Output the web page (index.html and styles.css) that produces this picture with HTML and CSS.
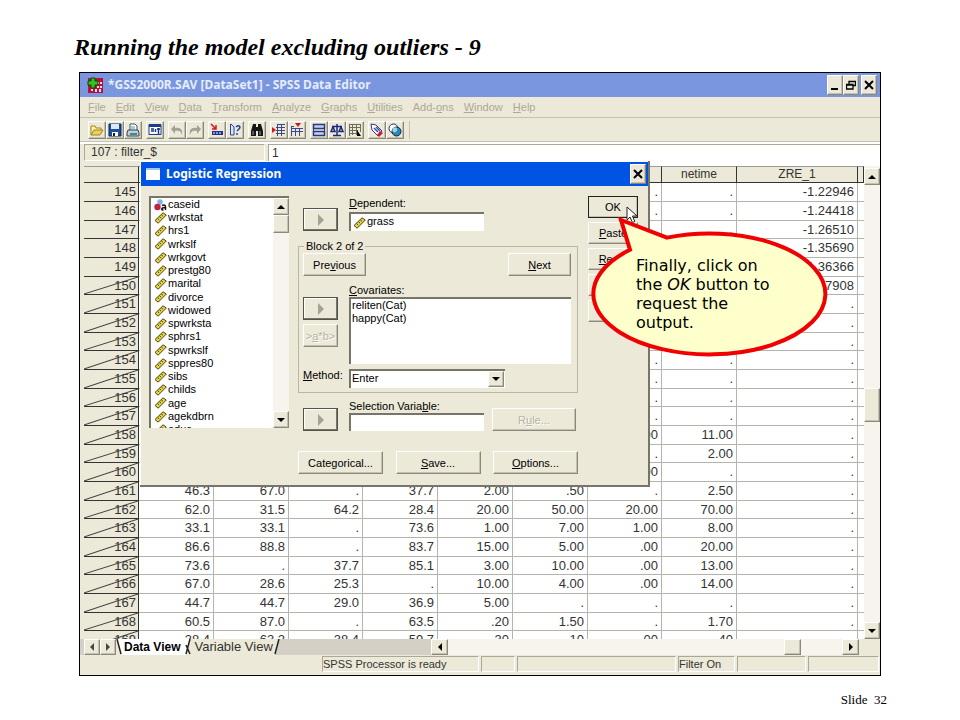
FILE: index.html
```html
<!DOCTYPE html>
<html lang="en">
<head>
<meta charset="utf-8">
<title>Running the model excluding outliers - 9</title>
<link rel="stylesheet" href="styles.css">
</head>
<body>
<svg class="defs" aria-hidden="true">
  <symbol id="ruler" viewBox="0 0 13 12">
    <path d="M1 8.500 9 .8 12.300 3 4.200 11.200Z" fill="#e8d63c" stroke="#4a4420" stroke-width="1"/>
    <path d="M3.600 6.600l1.600 1.300M5.500 4.800l1.600 1.300M7.400 3l1.600 1.300" stroke="#4a4420" stroke-width="1"/>
  </symbol>
  <symbol id="left" viewBox="0 0 8 8"><path d="M6 0v8L2 4z"/></symbol>
  <symbol id="right" viewBox="0 0 8 8"><path d="M2 0v8l4-4z"/></symbol>
  <symbol id="up" viewBox="0 0 8 8"><path d="M0 6h8L4 2z"/></symbol>
  <symbol id="down" viewBox="0 0 8 8"><path d="M0 2h8L4 6z"/></symbol>
  <symbol id="cross" viewBox="0 0 10 10"><path d="M1 1l8 8M9 1L1 9" stroke="#000" stroke-width="2"/></symbol>
  <symbol id="move" viewBox="0 0 8 12"><path d="M1 0v12l6-6z" fill="#a5a293"/></symbol>
</svg>

<main class="slide">
  <h1>Running the model excluding outliers - 9</h1>

  <section class="window">
    <header class="titlebar">
      <svg class="appicon" viewBox="0 0 16 16"><path d="M1 1h15v15H1z" fill="#b3123c"/><path d="M10 5h2v2h-2zM13 5h2v2h-2zM10 9h2v2h-2zM13 9h2v2h-2zM4 12h2v2H4zM8 12h2v3H8zM12 12h2v3h-2z" fill="#f4dfe4"/><path d="M4 1h4v3h3v4H8v3H4V8H1V4h3z" fill="#2fc41e" stroke="#064a06"/></svg>
      <span class="title">*GSS2000R.SAV [DataSet1] - SPSS Data Editor</span>
      <button class="raised sys" aria-label="Minimize"><svg viewBox="0 0 10 10"><path d="M1 8h7v2H1z"/></svg></button>
      <button class="raised sys" aria-label="Restore"><svg viewBox="0 0 10 10"><path d="M3 4V1.500h6.500v4H7M.5 4.500H7v4.500H.5zM3 1.500h6.500M.5 5H7" fill="none" stroke="#000" stroke-width="1.300"/></svg></button>
      <button class="raised sys last" aria-label="Close"><svg viewBox="0 0 10 10"><use href="#cross"/></svg></button>
    </header>

    <nav class="menu">
      <button><u>F</u>ile</button><button><u>E</u>dit</button><button><u>V</u>iew</button><button><u>D</u>ata</button><button><u>T</u>ransform</button><button><u>A</u>nalyze</button><button><u>G</u>raphs</button><button><u>U</u>tilities</button><button>Add-<u>o</u>ns</button><button><u>W</u>indow</button><button><u>H</u>elp</button>
    </nav>

    <div class="toolbar">
      <div class="tools">
        <button class="raised" aria-label="Open"><svg viewBox="0 0 14 14"><path d="M1 12V3h4l1 2h5v2" fill="#fff3a0" stroke="#97862a"/><path d="M1 12l3-5h9l-3 5z" fill="#f0d050" stroke="#97862a"/></svg></button>
        <button class="raised" aria-label="Save"><svg viewBox="0 0 14 14"><path d="M1 1h12v12H1z" fill="#1c4f9c" stroke="#0b2555"/><path d="M3 1h8v5H3z" fill="#dde8f6"/><path d="M4 9h6v4H4z" fill="#fff"/><path d="M5 10h2v3H5z" fill="#123"/></svg></button>
        <button class="raised" aria-label="Print"><svg viewBox="0 0 14 14"><path d="M4 7V1h5l2 2v4" fill="#fff" stroke="#456"/><path d="M2 7h10l1 3v3H1v-3z" fill="#c5cdd0" stroke="#345"/><path d="M5 4h4M5 6h4" stroke="#4b9bb5"/><path d="M4 10h7v2H4z" fill="#2f8da6"/></svg></button>
      </div>
      <div class="tools">
        <button class="raised" aria-label="Dialog recall"><svg viewBox="0 0 14 14"><path d="M1 1.500h12v10H1z" fill="#fff" stroke="#1d3c8e"/><path d="M1 1h12v3H1z" fill="#1d3c8e"/><path d="M3 6h3M3 8h3M7.500 6v3M10.500 5v6M9 6h3" stroke="#18347e" stroke-width="1.500"/></svg></button>
      </div>
      <div class="tools">
        <button class="raised" aria-label="Undo"><svg viewBox="0 0 14 14"><path d="M1 6l4-4v3c6-1 8 2 7 7-1-4-3-5-7-4v3z" fill="#a5a293"/></svg></button>
        <button class="raised" aria-label="Redo"><svg viewBox="0 0 14 14"><path d="M13 6L9 2v3C3 4 1 7 2 12c1-4 3-5 7-4v3z" fill="#a5a293"/></svg></button>
      </div>
      <div class="tools">
        <button class="raised" aria-label="Go to case"><svg viewBox="0 0 14 14"><path d="M1 1l5 5M6 2v4H2" fill="none" stroke="#d01820" stroke-width="1.500"/><path d="M2 8h11v4H2z" fill="#1d2f8e"/><path d="M4 9v2M7 9v2M10 9v2" stroke="#fff"/></svg></button>
        <button class="raised" aria-label="Variables"><svg viewBox="0 0 14 14"><path d="M2.500 1v11H6V4L3 1" fill="#dbe6ff" stroke="#27449b"/><path d="M8 4c3-3 5 0 3 2L9 8M9 10v2" fill="none" stroke="#27449b" stroke-width="1.500"/></svg></button>
      </div>
      <div class="tools">
        <button class="raised" aria-label="Find"><svg viewBox="0 0 14 14"><path d="M3 1h3v3h2V1h3l2 7v5H8V8H6v5H1V8z" fill="#161616"/><path d="M3 8v4M10 8v4" stroke="#999"/></svg></button>
      </div>
      <div class="tools">
        <button class="raised" aria-label="Insert case"><svg viewBox="0 0 14 14"><path d="M0 4l4 3-4 3z" fill="#d01820"/><path d="M5.500 1v12M9.500 1v12M5 1.500h8M4 4.500h9M4 7.500h9M4 10.500h9" stroke="#39498b"/></svg></button>
        <button class="raised" aria-label="Insert variable"><svg viewBox="0 0 14 14"><path d="M5 0h6L8 4z" fill="#d01820"/><path d="M1.500 3v10M5.500 5v8M9.500 5v8M1 5.500h12M1 8.500h12M1 3.500h3" stroke="#39498b"/></svg></button>
      </div>
      <div class="tools">
        <button class="raised" aria-label="Split file"><svg viewBox="0 0 14 14"><path d="M1.500 1.500h11v4h-11zM1.500 8.500h11v4h-11z" fill="#c4d2f0" stroke="#27387f" stroke-width="1.500"/><path d="M1.500 5v4M12.500 5v4" stroke="#27387f"/></svg></button>
        <button class="raised" aria-label="Weight cases"><svg viewBox="0 0 14 14"><path d="M7 1v11M3 12.500h8M2 3.500h10M1 8.500h4L3 4zM9 8.500h4L11 4z" fill="none" stroke="#1a2a7a" stroke-width="1.500"/></svg></button>
        <button class="raised" aria-label="Select cases"><svg viewBox="0 0 14 14"><path d="M1 1.500h12M1.500 1v12M4.500 1v11M8.500 1v11M12.500 1v8M1 4.500h12M1 7.500h9M1 10.500h9" stroke="#6c7056"/><path d="M9 7l4 6H9z"/></svg></button>
      </div>
      <div class="tools">
        <button class="raised" aria-label="Value labels"><svg viewBox="0 0 14 14"><path d="M1 1l5 1 6 6-4 5-6-6z" fill="#fff" stroke="#333a80"/><path d="M10 8l3 2-4 4-2-2z" fill="#d01830"/><path d="M4 5l4 4M6 4l4 4" stroke="#3b4fb0" stroke-width="1.500"/></svg></button>
        <button class="raised" aria-label="Use sets"><svg viewBox="0 0 14 14"><circle cx="5.500" cy="5.500" r="4.500" fill="#fff" stroke="#234"/><circle cx="8.500" cy="8.500" r="4.500" fill="#2a86b4" stroke="#123"/><path d="M5 9C3 6 6 3 9 5c1 3-1 5-4 4z" fill="#9bd0e6"/></svg></button>
      </div>
    </div>

    <div class="editor">
      <label for="cell">107 : filter_$</label>
      <input id="cell" type="text" value="1">
    </div>

    <div class="sheet">
      <div class="grid">
        <table>
          <colgroup><col class="rowno"><col class="c75"><col class="c75"><col class="c74"><col class="c75"><col class="c75"><col class="c75"><col class="c74"><col class="c75"><col><col class="tail"></colgroup>
          <thead><tr><th></th><th></th><th></th><th></th><th></th><th></th><th></th><th></th><th>netime</th><th>ZRE_1</th><th></th></tr></thead>
          <tbody>
            <tr><th>145</th><td colspan="6"></td><td>.</td><td>.</td><td>-1.22946</td><td></td></tr>
            <tr><th>146</th><td colspan="6"></td><td>.</td><td>.</td><td>-1.24418</td><td></td></tr>
            <tr><th>147</th><td colspan="6"></td><td>.</td><td>.</td><td>-1.26510</td><td></td></tr>
            <tr><th>148</th><td colspan="6"></td><td>.</td><td>.</td><td>-1.35690</td><td></td></tr>
            <tr><th>149</th><td colspan="6"></td><td>.</td><td>.</td><td>-1.36366</td><td></td></tr>
            <tr class="out"><th>150</th><td colspan="6"></td><td>.</td><td>.</td><td>-1.77908</td><td></td></tr>
            <tr class="out"><th>151</th><td colspan="6"></td><td>.</td><td>.</td><td>.</td><td></td></tr>
            <tr class="out"><th>152</th><td colspan="6"></td><td>.</td><td>.</td><td>.</td><td></td></tr>
            <tr class="out"><th>153</th><td colspan="6"></td><td>.</td><td>.</td><td>.</td><td></td></tr>
            <tr class="out"><th>154</th><td colspan="6"></td><td>.</td><td>.</td><td>.</td><td></td></tr>
            <tr class="out"><th>155</th><td colspan="6"></td><td>.</td><td>.</td><td>.</td><td></td></tr>
            <tr class="out"><th>156</th><td colspan="6"></td><td>.</td><td>.</td><td>.</td><td></td></tr>
            <tr class="out"><th>157</th><td colspan="6"></td><td>.</td><td>.</td><td>.</td><td></td></tr>
            <tr class="out"><th>158</th><td colspan="6"></td><td>.00</td><td>11.00</td><td>.</td><td></td></tr>
            <tr class="out"><th>159</th><td colspan="6"></td><td>.</td><td>2.00</td><td>.</td><td></td></tr>
            <tr class="out"><th>160</th><td colspan="6"></td><td>.00</td><td>.</td><td>.</td><td></td></tr>
            <tr class="out"><th>161</th><td>46.3</td><td>67.0</td><td>.</td><td>37.7</td><td>2.00</td><td>.50</td><td>.</td><td>2.50</td><td>.</td><td></td></tr>
            <tr class="out"><th>162</th><td>62.0</td><td>31.5</td><td>64.2</td><td>28.4</td><td>20.00</td><td>50.00</td><td>20.00</td><td>70.00</td><td>.</td><td></td></tr>
            <tr class="out"><th>163</th><td>33.1</td><td>33.1</td><td>.</td><td>73.6</td><td>1.00</td><td>7.00</td><td>1.00</td><td>8.00</td><td>.</td><td></td></tr>
            <tr class="out"><th>164</th><td>86.6</td><td>88.8</td><td>.</td><td>83.7</td><td>15.00</td><td>5.00</td><td>.00</td><td>20.00</td><td>.</td><td></td></tr>
            <tr class="out"><th>165</th><td>73.6</td><td>.</td><td>37.7</td><td>85.1</td><td>3.00</td><td>10.00</td><td>.00</td><td>13.00</td><td>.</td><td></td></tr>
            <tr class="out"><th>166</th><td>67.0</td><td>28.6</td><td>25.3</td><td>.</td><td>10.00</td><td>4.00</td><td>.00</td><td>14.00</td><td>.</td><td></td></tr>
            <tr class="out"><th>167</th><td>44.7</td><td>44.7</td><td>29.0</td><td>36.9</td><td>5.00</td><td>.</td><td>.</td><td>.</td><td>.</td><td></td></tr>
            <tr class="out"><th>168</th><td>60.5</td><td>87.0</td><td>.</td><td>63.5</td><td>.20</td><td>1.50</td><td>.</td><td>1.70</td><td>.</td><td></td></tr>
            <tr class="out"><th>169</th><td>38.4</td><td>63.2</td><td>38.4</td><td>59.7</td><td>.30</td><td>.10</td><td>.00</td><td>.40</td><td>.</td><td></td></tr>
          </tbody>
        </table>
      </div>
      <div class="vscroll">
        <button class="raised" aria-label="Scroll up"><svg viewBox="0 0 8 8"><use href="#up"/></svg></button>
        <div class="gap-a"></div><div class="raised thumb"></div><div class="gap-b"></div>
        <button class="raised" aria-label="Scroll down"><svg viewBox="0 0 8 8"><use href="#down"/></svg></button>
      </div>
    </div>

    <div class="tabs">
      <button class="raised nav" aria-label="Previous sheet"><svg viewBox="0 0 8 8"><use href="#left"/></svg></button>
      <button class="raised nav" aria-label="Next sheet"><svg viewBox="0 0 8 8"><use href="#right"/></svg></button>
      <svg class="edge" viewBox="0 0 6 16"><path d="M1 0l5 16V0z" fill="#fff"/><path d="M1 0l4 15" stroke="#222" stroke-width="1.500"/></svg>
      <button class="tab current">Data View</button>
      <svg class="edge" viewBox="0 0 6 16"><path d="M0 0h5L1 16H0z" fill="#fff"/><path d="M5 0L1 15M1 6l4 9" fill="none" stroke="#222" stroke-width="1.500"/></svg>
      <button class="tab">Variable View</button>
      <svg class="edge" viewBox="0 0 6 16"><path d="M6 0v16H1z" fill="#d4d0c8"/><path d="M5 0L1 15" stroke="#222" stroke-width="1.500"/></svg>
      <div class="filler"></div>
      <div class="hscroll">
        <button class="raised" aria-label="Scroll left"><svg viewBox="0 0 8 8"><use href="#left"/></svg></button>
        <div class="gap-a"></div><div class="raised thumb"></div><div class="gap-b"></div>
        <button class="raised" aria-label="Scroll right"><svg viewBox="0 0 8 8"><use href="#right"/></svg></button>
      </div>
      <div class="corner"></div>
    </div>

    <footer class="status">
      <span></span><span>SPSS Processor is ready</span><span></span><span></span><span>Filter On</span><span></span><span></span>
    </footer>

    <form class="dialog" role="dialog" aria-label="Logistic Regression" onsubmit="return false">
      <header class="dialogbar">
        <svg class="winicon" viewBox="0 0 14 12"><path d="M0 0h14v12H0z" fill="#fff"/><path d="M0 0h14v2H0z" fill="#9cc7ee"/></svg>
        <span class="title">Logistic Regression</span>
        <button type="button" class="raised sys" aria-label="Close"><svg viewBox="0 0 10 10"><use href="#cross"/></svg></button>
      </header>
      <div class="dialogbody">
        <div class="variables sunken">
          <ul>
            <li><svg viewBox="0 0 13 12"><circle cx="6" cy="3" r="2.800" fill="#7fb2ea"/><circle cx="3.500" cy="8" r="3.200" fill="#c81e3c"/><path d="M8 6.500c3-1.500 4 0 3.500 4.500M11 8.500c-4 0-4 3-1.500 2.500" fill="none" stroke="#111" stroke-width="1.500"/></svg>caseid</li>
            <li><svg><use href="#ruler"/></svg>wrkstat</li>
            <li><svg><use href="#ruler"/></svg>hrs1</li>
            <li><svg><use href="#ruler"/></svg>wrkslf</li>
            <li><svg><use href="#ruler"/></svg>wrkgovt</li>
            <li><svg><use href="#ruler"/></svg>prestg80</li>
            <li><svg><use href="#ruler"/></svg>marital</li>
            <li><svg><use href="#ruler"/></svg>divorce</li>
            <li><svg><use href="#ruler"/></svg>widowed</li>
            <li><svg><use href="#ruler"/></svg>spwrksta</li>
            <li><svg><use href="#ruler"/></svg>sphrs1</li>
            <li><svg><use href="#ruler"/></svg>spwrkslf</li>
            <li><svg><use href="#ruler"/></svg>sppres80</li>
            <li><svg><use href="#ruler"/></svg>sibs</li>
            <li><svg><use href="#ruler"/></svg>childs</li>
            <li><svg><use href="#ruler"/></svg>age</li>
            <li><svg><use href="#ruler"/></svg>agekdbrn</li>
            <li><svg><use href="#ruler"/></svg>educ</li>
          </ul>
          <div class="listscroll">
            <button type="button" class="raised" aria-label="Scroll up"><svg viewBox="0 0 8 8"><use href="#up"/></svg></button>
            <div class="raised thumb"></div><div class="rest"></div>
            <button type="button" class="raised" aria-label="Scroll down"><svg viewBox="0 0 8 8"><use href="#down"/></svg></button>
          </div>
        </div>

        <div class="model">
          <div class="pick">
            <button type="button" class="raised move" aria-label="Move to dependent"><svg><use href="#move"/></svg></button>
            <div class="field">
              <label for="dep"><u>D</u>ependent:</label>
              <div class="sunken withicon"><svg><use href="#ruler"/></svg><input id="dep" type="text" value="grass"></div>
            </div>
          </div>

          <fieldset>
            <legend>Block 2 of 2</legend>
            <div class="steps"><button type="button" class="raised push">Pre<u>v</u>ious</button><button type="button" class="raised push"><u>N</u>ext</button></div>
            <div class="covs">
              <label for="cov"><u>C</u>ovariates:</label>
              <div class="movers">
                <button type="button" class="raised move" aria-label="Move to covariates"><svg><use href="#move"/></svg></button>
                <button type="button" class="raised push disabled">&gt;<u>a</u>*b&gt;</button>
              </div>
              <select id="cov" class="sunken" multiple><option>reliten(Cat)</option><option>happy(Cat)</option></select>
            </div>
            <div class="method">
              <label for="method"><u>M</u>ethod:</label>
              <div class="combo sunken"><select id="method"><option>Enter</option></select><span class="raised drop"><svg viewBox="0 0 8 8"><use href="#down"/></svg></span></div>
            </div>
          </fieldset>

          <div class="pick selection">
            <button type="button" class="raised move" aria-label="Move to selection variable"><svg><use href="#move"/></svg></button>
            <div class="field">
              <label for="sel">Selection Varia<u>b</u>le:</label>
              <input id="sel" class="sunken" type="text">
            </div>
            <button type="button" class="raised push disabled rule">R<u>u</u>le...</button>
          </div>

          <div class="more">
            <button type="button" class="raised push">Cate<u>g</u>orical...</button>
            <button type="button" class="raised push"><u>S</u>ave...</button>
            <button type="button" class="raised push"><u>O</u>ptions...</button>
          </div>
        </div>

        <div class="actions">
          <button type="button" class="raised push default">OK</button>
          <button type="button" class="raised push"><u>P</u>aste</button>
          <button type="button" class="raised push"><u>R</u>eset</button>
          <button type="button" class="raised push">Cancel</button>
          <button type="button" class="raised push">Help</button>
        </div>
      </div>
    </form>

    <svg class="pointer" viewBox="0 0 12 18"><path d="M1 1v13l3-3 2.500 5.500 2.300-1L6.500 10H11z" fill="#fff" stroke="#222"/></svg>

    <aside class="callout">
      <svg viewBox="0 0 240 142"><path d="M33 3L79 20.600A116 60.500 0 1 1 42 32.800Z" fill="#ffffcc" stroke="#f00000" stroke-width="4"/></svg>
      <p>Finally, click on<br>the <em>OK</em> button to<br>request the<br>output.</p>
    </aside>
  </section>

  <p class="number">Slide&nbsp; 32</p>
</main>
</body>
</html>
```
FILE: styles.css
```css
* { box-sizing: border-box; }
body { margin: 0; background: #fff; color: #000; font: 11px/14px "Liberation Sans", Arial, sans-serif; }
button, input, select { font: inherit; color: inherit; margin: 0; padding: 0; border: 0; border-radius: 0; background: none; }
button { display: flex; align-items: center; justify-content: center; white-space: nowrap; }
.defs { position: absolute; width: 0; height: 0; }

.slide { padding: 32px 79px 0; }
h1 { margin: 0 0 10px -5px; font: italic bold 24px/30px "Liberation Serif", "Times New Roman", serif; }
.number { margin: 16px -6px 0 0; text-align: right; font: 13px/16px "Liberation Serif", "Times New Roman", serif; }

.window { position: relative; border: 1px solid #000; background: #ece9d8; padding-bottom: 3px; }
.raised { background: #ece9d8; border: 1px solid; border-color: #fff #8a887a #8a887a #fff; box-shadow: inset -1px -1px #c4c1b0; }
.sunken { background: #fff; border: solid #77756a; border-width: 2px 0 0 2px; }

.titlebar { display: flex; align-items: center; height: 24px; padding: 0 3px 0 7px; background: #7a96df; color: #e6edfb; }
.appicon { width: 16px; height: 16px; margin-right: 5px; }
.title { flex: 1; font: bold 12px/16px "Noto Sans", sans-serif; }
.sys { width: 16px; height: 20px; }
.sys svg { width: 10px; height: 10px; }
.sys.last { margin-left: 2px; }

.menu { display: flex; gap: 10px; height: 21px; padding: 0 8px; border-bottom: 1px solid #c5c2b2; color: #aca899; }

.toolbar { display: flex; align-items: center; gap: 4px; height: 24px; padding: 0 8px; border-bottom: 1px solid #c5c2b2; }
.tools { display: flex; }
.tools button { width: 18px; height: 18px; }
.tools svg { width: 14px; height: 14px; }
.tools:last-child { padding-right: 5px; border-right: 1px solid #c5c2b2; }

.editor { display: flex; height: 24px; padding-left: 4px; border-top: 2px solid #fff; font-size: 12px; color: #333; }
.editor label { width: 181px; height: 17px; padding-left: 6px; line-height: 15px; border: 1px solid #aca899; border-color: #aca899 #fff #fff #aca899; }
.editor input { flex: 1; min-width: 0; margin-left: 3px; padding: 0 3px 6px; background: #fff; border: solid #aca899; border-width: 1px 0 0 1px; }

.sheet { display: flex; height: 473px; padding-left: 4px; }
.grid { flex: 1; min-width: 0; overflow: hidden; background: #fff; }
table { width: 100%; border-collapse: separate; border-spacing: 0; table-layout: fixed; font-size: 13px; line-height: 17px; color: #333; }
.rowno { width: 55px; }
.c75 { width: 75px; }
.c74 { width: 74px; }
.tail { width: 6px; }
th, td { padding: 0; font-weight: normal; overflow: hidden; vertical-align: top; }
tr { height: 19px; }
tbody tr:nth-child(3n) { height: 18px; }
thead tr { height: 17px; }
thead th { background: #ece9d8; border: solid #333; border-width: 1px 1px 1px 0; border-top-color: #999; line-height: 15px; font-size: 12px; }
td { padding-right: 3px; text-align: right; border: solid #b4b4ac; border-width: 0 1px 1px 0; }
td:last-child { border-right: 0; padding: 0; }
tbody th { padding-right: 2px; text-align: right; background-color: #ece9d8; border: solid #333; border-width: 0 1px 1px 0; }
.out th { background-image: linear-gradient(to bottom right, transparent 47%, #444 50%, transparent 53%); }

.vscroll, .listscroll { display: flex; flex-direction: column; width: 16px; background: #f6f4ec; }
.vscroll { padding-top: 2px; }
.vscroll button, .listscroll button { height: 17px; flex: none; }
.vscroll svg, .listscroll svg, .hscroll svg, .nav svg { width: 8px; height: 8px; }
.vscroll .gap-a { flex: 204; }
.vscroll .gap-b { flex: 201; }
.vscroll .thumb { height: 34px; }

.tabs { display: flex; height: 16px; padding-left: 4px; font-size: 13px; line-height: 14px; background: #d4d0c8; }
.nav { width: 16px; }
.nav svg { opacity: 0.7; }
.tab { background: #ece9d8; color: #333; padding: 0 1px 0 3px; }
.tab.current { background: #fff; color: #000; font-weight: bold; font-size: 12px; padding: 0 5px 0 2px; }
.edge { width: 6px; height: 16px; flex: none; background: #ece9d8; }
.filler { flex: 1; }
.hscroll { display: flex; width: 428px; background: #f6f4ec; }
.hscroll button, .hscroll .thumb { width: 17px; }
.hscroll .gap-a { flex: 336; }
.hscroll .gap-b { flex: 41; }
.corner { width: 21px; border-left: 4px solid #ece9d8; background: #ece9d8; }

.status { display: grid; grid-template-columns: 236px 157px 34px 159px 57px 69px 1fr; gap: 2px; height: 17px; padding: 1px 1px 0 4px; }
.status span { border: 1px solid #aca899; border-color: #aca899 #fff #fff #aca899; color: #333; white-space: nowrap; }
.status span:first-child { border-color: transparent; }

.dialog { position: absolute; left: 60px; top: 88px; width: 510px; background: #ece9d8; border: solid #77756a; border-width: 0 2px 2px 0; box-shadow: inset 1px 1px #fff; padding-top: 1px; }
.dialogbar { display: flex; align-items: center; height: 24px; margin-left: 1px; padding: 0 2px 0 5px; background: #0054e3; color: #fff; }
.winicon { width: 14px; height: 12px; margin-right: 6px; }
.dialogbody { display: flex; padding: 10px 9px 11px 9px; }
.variables { display: flex; width: 140px; height: 232px; overflow: hidden; margin-right: 9px; }
ul { flex: 1; margin: 0; padding: 0; list-style: none; }
li { display: flex; align-items: center; gap: 1px; height: 13px; line-height: 13px; padding-left: 3px; }
li:nth-child(4n) { height: 14px; }
li svg, .withicon svg { width: 13px; height: 12px; flex: none; }
.listscroll .thumb { height: 18px; }
.listscroll .rest { flex: 1; }

.model { width: 280px; margin-right: 10px; }
.pick { display: flex; align-items: flex-end; gap: 11px; padding-left: 5px; margin-bottom: 8px; }
.move, .movers .push { width: 35px; height: 23px; }
.move { border-color: #55534b; box-shadow: inset -1px -1px #77756a, inset 1px 1px #fff; }
.move svg { width: 8px; height: 12px; }
.field { width: 135px; }
label { display: block; white-space: nowrap; }
.withicon { display: flex; align-items: center; gap: 1px; height: 19px; margin-top: 2px; padding-left: 2px; }
.withicon input { width: 100%; min-width: 0; height: 14px; margin-bottom: 3px; }
.push { height: 23px; }
.disabled { color: #b5b2a2; text-shadow: 1px 1px #fff; }
fieldset { margin: 0; padding: 0 6px 4px 4px; border: 1px solid #b9b6a5; min-width: 0; }
legend { margin-left: 1px; padding: 0 2px; height: 14px; }
.steps { display: flex; justify-content: space-between; margin-bottom: 7px; }
.steps .push { width: 63px; }
.covs { display: grid; grid-template-columns: 35px 1fr; column-gap: 11px; }
.covs label { grid-column: 2; }
.movers { display: flex; flex-direction: column; gap: 4px; }
.covs select { width: 100%; height: 67px; overflow: hidden; padding: 0; }
.covs option { padding: 0 0 0 1px; min-height: 13px; line-height: 13px; }
.method { display: flex; margin-top: 5px; }
.method label { width: 46px; line-height: 12px; }
.combo { position: relative; width: 156px; height: 19px; }
.combo select { appearance: none; width: 100%; height: 14px; padding-left: 1px; }
.drop { position: absolute; right: 1px; top: 0; width: 16px; height: 16px; display: flex; align-items: center; justify-content: center; pointer-events: none; }
.drop svg { width: 8px; height: 8px; }
.selection { margin: 6px 0 20px; }
.field > input { display: block; width: 100%; height: 18px; }
.rule { flex: 1; margin: 0 2px 0 -3px; }
.more { display: flex; justify-content: space-between; }
.more .push { width: 85px; }
.actions { display: flex; flex-direction: column; gap: 4px; width: 50px; }
.actions .push { height: 22px; }
.actions .default { border-color: #222; }

.pointer { position: absolute; left: 546px; top: 133px; width: 12px; height: 18px; }
.callout { position: absolute; left: 508px; top: 144px; width: 240px; height: 142px; }
.callout svg { position: absolute; width: 240px; height: 142px; }
.callout p { position: relative; margin: 0; padding: 39px 0 0 48px; font: 16px/19px "DejaVu Sans", Verdana, sans-serif; white-space: nowrap; }
```
